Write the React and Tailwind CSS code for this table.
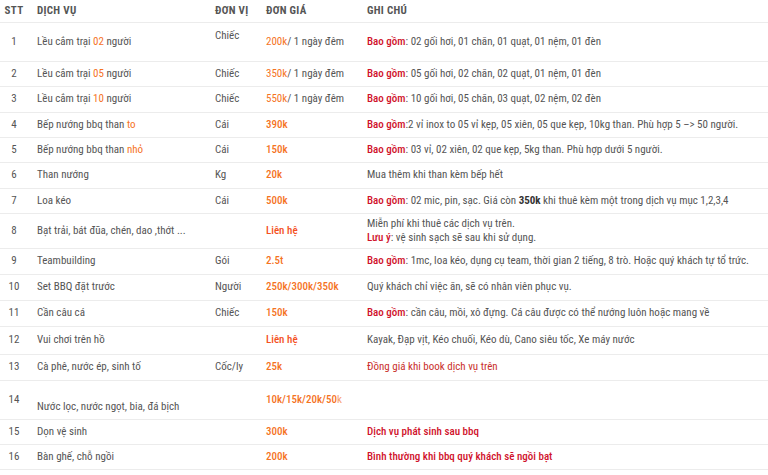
import React from 'react'

const O = ({ children, b = true }) => <span className={`text-[#f5731f] ${b ? 'font-medium' : ''}`}>{children}</span>
const R = ({ children }) => <span className="text-[#d0112b] font-medium">{children}</span>

const rows = [
  {
    h: 'h-[39px]',
    stt: '1',
    name: <>Lều cắm trại <O b={false}>02</O> người</>,
    unit: 'Chiếc',
    unitTop: true,
    price: <><O b={false}>200k</O>/ 1 ngày đêm</>,
    note: <><R>Bao gồm</R>: 02 gối hơi, 01 chăn, 01 quạt, 01 nệm, 01 đèn</>
  },
  {
    h: 'h-[25px]',
    stt: '2',
    name: <>Lều cắm trại <O b={false}>05</O> người</>,
    unit: 'Chiếc',
    price: <><O b={false}>350k</O>/ 1 ngày đêm</>,
    note: <><R>Bao gồm</R>: 05 gối hơi, 02 chăn, 02 quạt, 01 nệm, 01 đèn</>
  },
  {
    h: 'h-[26px]',
    stt: '3',
    name: <>Lều cắm trại <O b={false}>10</O> người</>,
    unit: 'Chiếc',
    price: <><O b={false}>550k</O>/ 1 ngày đêm</>,
    note: <><R>Bao gồm</R>: 10 gối hơi, 05 chăn, 03 quạt, 02 nệm, 02 đèn</>
  },
  {
    h: 'h-[25px]',
    stt: '4',
    name: <>Bếp nướng bbq than <O b={false}>to</O></>,
    unit: 'Cái',
    price: <O>390k</O>,
    note: <><R>Bao gồm</R>:2 vỉ inox to 05 vỉ kẹp, 05 xiên, 05 que kẹp, 10kg than. Phù hợp 5 –&gt; 50 người.</>
  },
  {
    h: 'h-[25px]',
    stt: '5',
    name: <>Bếp nướng bbq than <O b={false}>nhỏ</O></>,
    unit: 'Cái',
    price: <O>150k</O>,
    note: <><R>Bao gồm</R>: 03 vỉ, 02 xiên, 02 que kẹp, 5kg than. Phù hợp dưới 5 người.</>
  },
  {
    h: 'h-[26px]',
    stt: '6',
    name: 'Than nướng',
    unit: 'Kg',
    price: <O>20k</O>,
    note: 'Mua thêm khi than kèm bếp hết'
  },
  {
    h: 'h-[25px]',
    stt: '7',
    name: 'Loa kéo',
    unit: 'Cái',
    price: <O>500k</O>,
    note: <><R>Bao gồm</R>: 02 mic, pin, sạc. Giá còn <b className="font-bold text-[#333]">350k</b> khi thuê kèm một trong dịch vụ mục 1,2,3,4</>
  },
  {
    h: 'h-[35px]',
    stt: '8',
    name: 'Bạt trải, bát đũa, chén, dao ,thớt ...',
    unit: '',
    price: <span className="text-[#f4511e] font-medium">Liên hệ</span>,
    note: <>Miễn phí khi thuê các dịch vụ trên.<br /><R>Lưu ý</R>: vệ sinh sạch sẽ sau khi sử dụng.</>
  },
  {
    h: 'h-[26px]',
    stt: '9',
    name: 'Teambuilding',
    unit: 'Gói',
    price: <O>2.5t</O>,
    note: <><R>Bao gồm</R>: 1mc, loa kéo, dụng cụ team, thời gian 2 tiếng, 8 trò. Hoặc quý khách tự tổ trức.</>
  },
  {
    h: 'h-[26px]',
    stt: '10',
    name: 'Set BBQ đặt trước',
    unit: 'Người',
    price: <O>250k/300k/350k</O>,
    note: 'Quý khách chỉ việc ăn, sẽ có nhân viên phục vụ.'
  },
  {
    h: 'h-[26px]',
    stt: '11',
    name: 'Cần câu cá',
    unit: 'Chiếc',
    price: <O>150k</O>,
    note: <><R>Bao gồm</R>: cần câu, mồi, xô đựng. Cá câu được có thể nướng luôn hoặc mang về</>
  },
  {
    h: 'h-[28px]',
    stt: '12',
    name: 'Vui chơi trên hồ',
    unit: '',
    price: <span className="text-[#f4511e] font-medium">Liên hệ</span>,
    note: 'Kayak, Đạp vịt, Kéo chuối, Kéo dù, Cano siêu tốc, Xe máy nước'
  },
  {
    h: 'h-[26px]',
    stt: '13',
    name: 'Cà phê, nước ép, sinh tố',
    unit: 'Cốc/ly',
    price: <O>25k</O>,
    note: <span className="text-[#c9302c]">Đồng giá khi book dịch vụ trên</span>
  },
  {
    h: 'h-[39px]',
    stt: '14',
    name: <span className="block pt-[15px]">Nước lọc, nước ngọt, bia, đá bịch</span>,
    unit: '',
    price: <O>10k/15k/20k/50<span className="font-normal text-[#f8a070]">k</span></O>,
    note: ''
  },
  {
    h: 'h-[25px]',
    stt: '15',
    name: 'Dọn vệ sinh',
    unit: '',
    price: <O>300k</O>,
    note: <R>Dịch vụ phát sinh sau bbq</R>
  },
  {
    h: 'h-[25px]',
    stt: '16',
    name: 'Bàn ghế, chỗ ngồi',
    unit: '',
    price: <O>200k</O>,
    note: <R>Bình thường khi bbq quý khách sẽ ngồi bạt</R>
  }
]

export default function App() {
  return (
    <div className="w-[768px] h-[475px] bg-white overflow-hidden font-['Roboto',sans-serif] [font-stretch:87.5%] text-[11px] leading-[14px] text-[#555]">
      <table className="w-full table-fixed border-collapse">
        <colgroup>
          <col className="w-[28px]" />
          <col className="w-[178px]" />
          <col className="w-[51px]" />
          <col className="w-[101px]" />
          <col />
        </colgroup>
        <thead>
          <tr className="h-[22px] border-b border-[#ececec] text-[#555] font-bold uppercase tracking-[0.3px]">
            <th className="text-center align-middle font-bold">STT</th>
            <th className="pl-[9px] text-left align-middle font-bold">Dịch vụ</th>
            <th className="pl-[9px] text-left align-middle font-bold">Đơn vị</th>
            <th className="pl-[9px] text-left align-middle font-bold">Đơn giá</th>
            <th className="pl-[9px] text-left align-middle font-bold">Ghi chú</th>
          </tr>
        </thead>
        <tbody>
          {rows.map((r) => (
            <tr key={r.stt} className={`${r.h} border-b border-[#ececec]`}>
              <td className="text-center align-middle">{r.stt}</td>
              <td className="pl-[9px] align-middle whitespace-nowrap">{r.name}</td>
              <td className={`pl-[9px] whitespace-nowrap ${r.unitTop ? 'align-top pt-[6px]' : 'align-middle'}`}>{r.unit}</td>
              <td className="pl-[9px] align-middle whitespace-nowrap">{r.price}</td>
              <td className="pl-[9px] align-middle whitespace-nowrap">{r.note}</td>
            </tr>
          ))}
        </tbody>
      </table>
    </div>
  )
}
